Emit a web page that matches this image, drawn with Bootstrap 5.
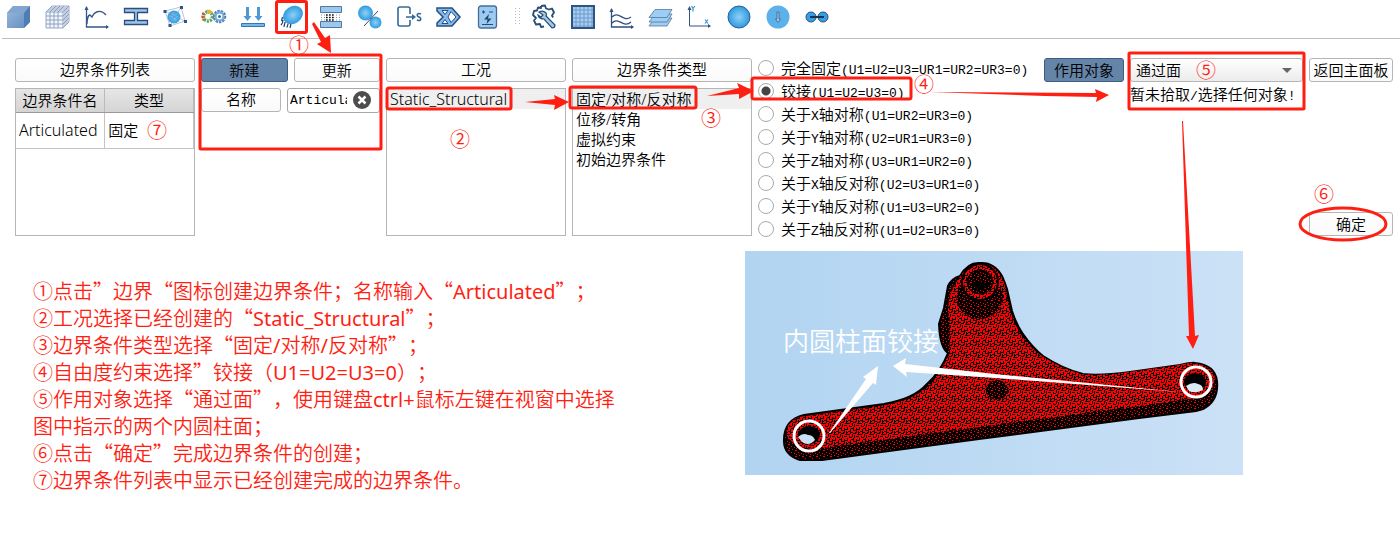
<!DOCTYPE html>
<html lang="zh-CN">
<head>
<meta charset="utf-8">
<meta name="viewport" content="width=device-width, initial-scale=1">
<title>边界条件</title>
<link href="https://cdn.jsdelivr.net/npm/bootstrap@5.3.0/dist/css/bootstrap.min.css" rel="stylesheet">
<style>
:root { --hot: #ff1e12; --edge: #b5b5b5; }
body { font-family: "Noto Sans", "Noto Sans CJK SC", sans-serif; font-size: 15px; line-height: 20px; color: #000; background: #fff; text-spacing-trim: space-all; }
.toolbar { height: 39px; border-bottom: 1px solid #bdbdbd; margin-left: 2px; padding-bottom: 4px; }
.tool { width: 39px; height: 34px; padding: 0; border: 0; background: none; flex: none; }
.tool:first-child { margin-left: -3px; }
.tool svg { width: 26px; height: 26px; display: block; margin: auto; }
.tool.hotbox { width: 33px; margin: 0 3px; }
.grip { width: 18px; height: 18px; }
.hotbox { outline: 3px solid var(--hot); outline-offset: -3px; border-radius: 3px; }
.panels { display: grid; grid-template-columns: 180fr 179fr 180fr 180fr 280fr 80fr 173fr 84fr; gap: 6px; padding: 17px 7px 0 15px; }
.pane { position: relative; min-width: 0; display: flex; flex-direction: column; gap: 6px; padding-top: 2px; }
.half { font-family: "Liberation Mono", monospace; font-size: 13px; line-height: 1; }
.wide { font-size: 16px; line-height: 1; }
.cell { height: 24px; padding: 0; border: 1px solid var(--edge); border-radius: 3px; background: linear-gradient(#fff, #fafafa); font-size: 15px; line-height: 20px; color: #000; white-space: nowrap; text-align: center; font-family: "Noto Sans CJK SC", sans-serif; font-weight: 350; }
.cell.picked { background: #6484a8; border-color: #3c5c80; }
.pair { display: grid; grid-template-columns: 1fr 1fr; gap: 6px; }
.pair.named { grid-template-columns: 80fr 93fr; }
.frame { border: 1px solid var(--edge); flex: 1 1 auto; min-height: 148px; }
.choices { padding: 0; margin: 0; list-style: none; font-weight: 350; }
.choices li { padding: 0 3px; }
.choices li.on { background: #efefef; }
.grid-table { width: 100%; border-collapse: collapse; table-layout: fixed; font-weight: 350; }
.grid-table th { font-weight: 350; height: 23px; padding: 0; text-align: center; background: linear-gradient(#e6e6e6, #d4d4d4); border-bottom: 1px solid #999; border-right: 1px solid #bbb; white-space: nowrap; }
.grid-table td { height: 36px; padding: 0 3px; border-right: 1px solid #c4c4c4; border-bottom: 1px solid #c4c4c4; white-space: nowrap; }
.grid-table th:first-child { width: 50%; }
.namebox { position: relative; }
.namebox input { width: 100%; height: 25px; border: 1px solid #a8a8a8; border-radius: 3px; padding: 0 32px 0 2px; font-family: "Liberation Mono", monospace; font-size: 13px; display: block; }
.namebox button { position: absolute; right: 9px; top: 3px; width: 18px; height: 18px; padding: 0; border: 0; background: none; }
.namebox svg { display: block; }
.opts { padding-top: 0; gap: 0; margin-bottom: -4px; }
.opts label { display: flex; align-items: center; gap: 7px; height: 23px; white-space: nowrap; font-weight: 350; font-family: "Noto Sans CJK SC", sans-serif; }
.opts input { appearance: none; width: 16px; height: 16px; margin: 0; border: 1px solid #a9a9a9; border-radius: 50%; background: #fff; flex: none; }
.opts input:checked { background: radial-gradient(circle, #444 0 4px, #fff 5px); }
.combo { width: 100%; text-align: left; appearance: none; padding: 0 5px; background: url("data:image/svg+xml,%3Csvg xmlns='http://www.w3.org/2000/svg' width='10' height='5'%3E%3Cpath d='M0 0h10L5 5z' fill='%23666'/%3E%3C/svg%3E") no-repeat right 10px center, linear-gradient(#fff, #ececec); }
.status { font-family: "Noto Sans CJK SC", sans-serif; font-weight: 350; margin-top: -4px; white-space: nowrap; }
.marks { position: absolute; left: 0; top: 0; width: 1px; height: 1px; overflow: visible; pointer-events: none; z-index: 3; fill: var(--hot); font-family: "Noto Sans CJK SC", sans-serif; font-size: 20px; font-weight: 350; }
.marks .ring { fill: none; stroke: var(--hot); stroke-width: 3; }
.lower { display: grid; grid-template-columns: 745fr 498fr 157fr; padding-top: 15px; }
.steps { padding: 26px 0 0 33px; color: var(--hot); font-size: 20px; line-height: 27px; font-family: "Noto Sans CJK SC", sans-serif; font-weight: 350; }
.steps p { margin: 0; }
.steps span { font-family: "Noto Sans", sans-serif; font-weight: 400; line-height: 1; }
.model { display: block; width: 100%; height: auto; }
</style>
</head>
<body>
<svg width="0" height="0" class="position-absolute" aria-hidden="true">
  <defs>
    <radialGradient id="ball"><stop offset="0" stop-color="#8fd0f5"/><stop offset="1" stop-color="#2f9be0"/></radialGradient>
    <linearGradient id="steel" x2="1" y2="1"><stop offset="0" stop-color="#9dbcdd"/><stop offset="1" stop-color="#5f8bbd"/></linearGradient>
    <linearGradient id="sky" x1="0" y1="0" x2="1" y2="0"><stop offset="0" stop-color="#b1d4f1"/><stop offset="1" stop-color="#cbe1f6"/></linearGradient>
    <pattern id="mesh" width="12" height="11" patternUnits="userSpaceOnUse"><g shape-rendering="crispEdges"><path d="M0 0h12v11H0z" fill="#f00"/><path d="M0 0h1v4H0zM3 1h1v5H3zM6 0h1v3H6zM9 2h1v5H9zM1 3h2v1H1zM4 2h2v1H4zM7 4h2v1H7zM10 1h2v1h-2zM0 6h3v1H0zM5 4h1v4H5zM6 7h3v1H6zM10 5h2v1h-2zM1 8h1v3H1zM3 9h3v1H3zM8 9h1v2H8zM11 7h1v3h-1zM9 10h2v1H9zM4 7h1v1H4zM2 5h1v1H2zM6 5h1v1H6z" fill="#000"/></g></pattern>
    <pattern id="dense" width="7" height="6" patternUnits="userSpaceOnUse"><g shape-rendering="crispEdges"><path d="M0 0h7v6H0z"/><path d="M1 1h2v1H1zM4 3h1v1H4zM0 4h1v1H0zM5 0h1v1H5zM2 5h1v1H2z" fill="#f00"/></g></pattern>
  </defs>
</svg>

<header class="toolbar d-flex align-items-center position-relative">
  <button class="tool" aria-label="几何"><svg viewBox="0 0 26 26"><path d="M1 9 7 2h17v16l-6 6H1z" fill="url(#steel)"/><path d="M1 9 7 2h17l-6 7z" fill="#82a6cf"/><path d="m18 9 6-7v16l-6 6z" fill="#4f7db2"/></svg></button>
  <button class="tool" aria-label="网格"><svg viewBox="0 0 26 26" fill="none" stroke="#7c94b8" stroke-width=".8"><path fill="#f2f6fc" d="M1 8 7 2h17v16l-6 6H1z"/><path d="M1 8h17v16M1 12h17M1 16h17M1 20h17M5 8v16M9 8v16M13 8v16M3 6h17M5 4h17M5 8l6-6M9 8l6-6M13 8l6-6M18 8l6-6M18 12l6-6M18 16l6-6M18 20l6-6M20 6v16M22 4v16"/></svg></button>
  <button class="tool" aria-label="曲线"><svg viewBox="0 0 26 26" fill="none" stroke="#35568a" stroke-width="1.300"><path d="M2.500 3v20H24M3 20c0-4 1-9 3-9l2 2C11 6 18 6 22 11"/><path d="m.5 6 2-4 2 4zM22 21l3 2-3 2z" fill="#35568a" stroke="none"/></svg></button>
  <button class="tool" aria-label="截面"><svg viewBox="0 0 26 26" fill="#9cc6ea" stroke="#2e4d78" stroke-width="1.300"><path d="M1.500 4.500h23v4H14.500v8h10v4h-23v-4h10v-8h-10z"/></svg></button>
  <button class="tool" aria-label="耦合"><svg viewBox="0 0 26 26"><path d="m3 7 16-4 4 14-15 5zM3 7l20 10M19 3 8 22" fill="none" stroke="#a9b5c6" stroke-width=".8"/><circle cx="12" cy="13" r="6.500" fill="url(#ball)"/><path d="M8 10l8 5M14 8l-4 9M8 15l8-4" stroke="#5b8fc0" stroke-width=".7"/><g fill="#315487"><path d="M1.500 6h3v3h-3zM18 2h3v3h-3zM22 16h3v3h-3zM6.500 20h3v3h-3z"/></g></svg></button>
  <button class="tool" aria-label="属性"><svg viewBox="0 0 26 26" fill="none"><circle cx="7" cy="12.500" r="4.500" stroke="#5aab56" stroke-width="3.500" stroke-dasharray="2 1"/><path d="M6 7a6 6 0 0 1 5 2" stroke="#e7b232" stroke-width="3"/><path d="M3 9a6 6 0 0 0 0 7" stroke="#d05239" stroke-width="3" stroke-dasharray="2 1"/><circle cx="18.500" cy="12.500" r="5" stroke="#4c86bc" stroke-width="3.500" stroke-dasharray="2.200 .8"/><circle cx="18.500" cy="12.500" r="4" stroke="#7badd6" stroke-width="2"/><circle cx="18.500" cy="12.500" r="1.500" fill="#3b6c9e"/></svg></button>
  <button class="tool" aria-label="载荷"><svg viewBox="0 0 26 26" fill="#4f98d6"><path d="M6 3h3v9h2.500l-4 5-4-5H6zM17 3h3v9h2.500l-4 5-4-5H17z"/><path d="M1.500 19.500h23v3h-23z" fill="#78b7ea" stroke="#3475b4"/></svg></button>
  <button class="tool hotbox" aria-label="边界"><svg viewBox="0 0 26 26"><ellipse cx="14" cy="11" rx="10.500" ry="8.500" transform="rotate(-35 14 11)" fill="url(#ball)"/><path d="M4 16c0 3-1 4-2 5M6 18c0 2-1 3-1 5M9 19.500c0 2-1 3-1 4M12 20l-1 4M3.500 13l-1 4" fill="none" stroke="#263d60" stroke-width="1.200"/></svg></button>
  <button class="tool" aria-label="接触"><svg viewBox="0 0 26 26"><path d="M2.500 2.500h21v6h-21zM2.500 17.500h21v6h-21z" fill="#9dc8ee" stroke="#52779f"/><path d="M3 11h20M3 13.500h20M3 16h20" stroke="#8392a8" stroke-dasharray="1 2"/><path d="M8 11h9M8 13.500h9M8 16h9" stroke="#111" stroke-width="1.500" stroke-dasharray="1.500 1.500"/></svg></button>
  <button class="tool" aria-label="连接"><svg viewBox="0 0 26 26"><circle cx="8.500" cy="9" r="7.500" fill="url(#ball)"/><circle cx="18.500" cy="18.500" r="6" fill="url(#ball)"/><path d="M21 7 7 22" stroke="#35465d"/></svg></button>
  <button class="tool" aria-label="输出"><svg viewBox="0 0 26 26" fill="none" stroke="#346997" stroke-width="1.600"><path d="M14 10V5q0-2-2-2H4Q2 3 2 5v15q0 2 2 2h8q2 0 2-2v-4M10 13h8"/><path d="m16 10 4 3-4 3z" fill="#346997" stroke="none"/><path d="M25 10c-4-2-5 2-2 3s2 5-2 3"/></svg></button>
  <button class="tool" aria-label="求解"><svg viewBox="0 0 26 26"><path d="M2 4h15l8 9-8 9H2v-3l6-6-6-6z" fill="#80bcf0" stroke="#294d7d" stroke-width="1.500"/><path d="M7 6.500h6l-3 4zM7 19.500h6l-3-4zM16 7.500 21 13l-5 5.500-3-5.500z" fill="#fff" stroke="#294d7d"/></svg></button>
  <button class="tool" aria-label="计算"><svg viewBox="0 0 26 26"><rect x="4.500" y="2" width="18" height="22" rx="2.500" fill="#9bcaf3" stroke="#4a6d98" stroke-width="1.300"/><path d="M8 8h3M9.500 6.500v3M15 8h4M8 20.500h11" stroke="#294b78" stroke-width="1.200"/><path d="m15 10-5 5.500h3.500L12.500 20l5-5.500H14z" fill="#21436d"/></svg></button>
  <svg class="grip" viewBox="0 0 18 18" aria-hidden="true"><path d="M9.500 0v18M13.500 0v18" stroke="#b9b9b9" stroke-dasharray="1 2"/></svg>
  <button class="tool" aria-label="设置"><svg viewBox="0 0 26 26"><path d="m10 2 4-.5 1 3 3 1 3-1 2 4-2 3 1 2M13 22.500l-3 .5-1-3-4 .5-2-4 2-2.500-3-3 1-4 3-.5 1-3 3 .5 0-2" fill="none" stroke="#284c78" stroke-width="1.800" stroke-linejoin="round"/><path d="M8 8q4-2 7 1 1 2 0 3l9 9q0 3-3 3l-8-9q-5 0-6-4l3 2 2-2z" fill="#9ecbee" stroke="#284c78" stroke-width="1.200"/></svg></button>
  <button class="tool" aria-label="表格"><svg viewBox="0 0 26 26"><path d="M2 2h22v22H2z" fill="#a3cdf3" stroke="#2f5482" stroke-width="2"/><path d="M6 3v20M10 3v20M14 3v20M18 3v20M22 3v20M3 6h20M3 10h20M3 14h20M3 18h20M3 22h20" stroke="#658fbd" stroke-width=".8"/></svg></button>
  <button class="tool" aria-label="图表"><svg viewBox="0 0 26 26" fill="none" stroke="#2d4f7e" stroke-width="1.300"><path d="M2.500 5v18H24M3 13c7-7 11 6 19 0M3 19c7-7 11 6 19-1"/><path d="m.5 8 2-4 2 4zM22 21l3 2-3 2z" fill="#2d4f7e" stroke="none"/></svg></button>
  <button class="tool" aria-label="图层"><svg viewBox="0 0 26 26" fill="#9fccf2" stroke="#54779e" stroke-width=".8"><path d="M7 14h17l-5 8H1z"/><path d="M7 10h17l-5 8H1z"/><path d="M7 5.500h17l-5 8H1z"/></svg></button>
  <button class="tool" aria-label="坐标"><svg viewBox="0 0 26 26" fill="none" stroke="#34547d"><path d="M2.500 4v18H23"/><path d="m.5 6 2-4 2 4zM21 20l3 2-3 2z" fill="#34547d" stroke="none"/><path d="m4.500 2 1.500 2.500v3M8 2 6 4.500M18 15.500l3 4m0-4-3 4" stroke="#3399d8" stroke-width="1.200"/></svg></button>
  <button class="tool" aria-label="球体"><svg viewBox="0 0 26 26"><circle cx="13" cy="13" r="11" fill="url(#ball)" stroke="#2b5f91"/></svg></button>
  <button class="tool" aria-label="下移"><svg viewBox="0 0 26 26"><circle cx="13" cy="13" r="11.500" fill="#5cb1ea"/><path d="M12 8h2v7h1.500L13 18.500 10.500 15H12z" fill="#a5c8e9" stroke="#3c638e" stroke-width=".8"/></svg></button>
  <button class="tool" aria-label="关联"><svg viewBox="0 0 26 26" fill="#35a0df" stroke="#294f7e"><circle cx="7" cy="13" r="5"/><circle cx="19" cy="13" r="5"/><path d="M6 13h14" stroke="#173456" stroke-width="2"/></svg></button>
  <svg class="marks" aria-hidden="true"><path d="m310 24 2-2 11 16 5-3 1 18-14-9 4-2z"/><text x="287" y="53">①</text></svg>
</header>

<main>
<div class="panels">
  <section class="pane">
    <div class="cell">边界条件列表</div>
    <div class="frame">
      <table class="grid-table"><thead><tr><th>边界条件名</th><th>类型</th></tr></thead><tbody><tr><td><span class="wide">Articulated</span></td><td>固定</td></tr></tbody></table>
    </div>
    <svg class="marks" aria-hidden="true"><text x="132" y="82">⑦</text></svg>
  </section>

  <section class="pane">
    <div class="pair"><button class="cell picked">新建</button><button class="cell">更新</button></div>
    <div class="pair named"><label class="cell" for="bcname">名称</label><div class="namebox"><input id="bcname" value="Articulated"><button aria-label="清除"><svg viewBox="0 0 18 18" width="18" height="18"><circle cx="9" cy="9" r="9" fill="#4d4d4d"/><path d="m5.500 5.500 7 7m0-7-7 7" stroke="#fff" stroke-width="2.500"/></svg></button></div></div>
    <svg class="marks" aria-hidden="true"><rect class="ring" x="-1" y="-1" width="181" height="94" rx="1"/></svg>
  </section>

  <section class="pane">
    <div class="cell">工况</div>
    <div class="frame"><ul class="choices"><li class="on"><span class="wide">Static_Structural</span></li></ul></div>
    <svg class="marks" aria-hidden="true"><rect class="ring" x="1" y="32" width="124" height="21" rx="2"/><path d="m139 46 30-3-1-4 15 7-15 8 1-5z"/><text x="64" y="91">②</text></svg>
  </section>

  <section class="pane">
    <div class="cell">边界条件类型</div>
    <div class="frame"><ul class="choices"><li class="on">固定/对称/反对称</li><li>位移/转角</li><li>虚拟约束</li><li>初始边界条件</li></ul></div>
    <svg class="marks" aria-hidden="true"><rect class="ring" x="-2" y="31" width="126" height="21" rx="2"/><path d="m135 40 32-8-2-5 17 8-15 8v-5z"/><text x="129" y="70">③</text></svg>
  </section>

  <section class="pane opts">
    <label><input type="radio" name="dof"><span>完全固定<span class="half">(U1=U2=U3=UR1=UR2=UR3=0)</span></span></label>
    <label><input type="radio" name="dof" checked><span>铰接<span class="half">(U1=U2=U3=0)</span></span></label>
    <label><input type="radio" name="dof"><span>关于<span class="half">X</span>轴对称<span class="half">(U1=UR2=UR3=0)</span></span></label>
    <label><input type="radio" name="dof"><span>关于<span class="half">Y</span>轴对称<span class="half">(U2=UR1=UR3=0)</span></span></label>
    <label><input type="radio" name="dof"><span>关于<span class="half">Z</span>轴对称<span class="half">(U3=UR1=UR2=0)</span></span></label>
    <label><input type="radio" name="dof"><span>关于<span class="half">X</span>轴反对称<span class="half">(U2=U3=UR1=0)</span></span></label>
    <label><input type="radio" name="dof"><span>关于<span class="half">Y</span>轴反对称<span class="half">(U1=U3=UR2=0)</span></span></label>
    <label><input type="radio" name="dof"><span>关于<span class="half">Z</span>轴反对称<span class="half">(U1=U2=UR3=0)</span></span></label>
    <svg class="marks" aria-hidden="true"><rect class="ring" x="-6" y="22" width="159" height="21" rx="2"/><path d="m172 36 166 1-1-4 14 6-13 7 1-5-52-1z"/><text x="156" y="36">④</text></svg>
  </section>

  <section class="pane"><button class="cell picked">作用对象</button></section>

  <section class="pane">
    <select class="cell combo" aria-label="选择方式"><option>通过面</option></select>
    <div class="status">暂未拾取<span class="half">/</span>选择任何对象<span class="half">!</span></div>
    <svg class="marks" aria-hidden="true"><rect class="ring" x="-1" y="-3" width="175" height="56" rx="1"/><text x="66" y="22">⑤</text><path d="M52 65h1l12 215 4-1-6 14-7-13h3z"/></svg>
  </section>

  <section class="pane justify-content-between">
    <button class="cell">返回主面板</button>
    <button class="cell">确定</button>
    <svg class="marks" aria-hidden="true"><ellipse class="ring" cx="34" cy="168" rx="43" ry="16"/><text x="5" y="146">⑥</text></svg>
  </section>
</div>

<div class="lower">
  <section class="steps">
    <p>①点击”边界“图标创建边界条件；名称输入“<span>Articulated</span>”；</p>
    <p>②工况选择已经创建的“<span>Static_Structural</span>”；</p>
    <p>③边界条件类型选择“固定<span>/</span>对称<span>/</span>反对称”；</p>
    <p>④自由度约束选择”铰接（<span>U1=U2=U3=0</span>）；</p>
    <p>⑤作用对象选择“通过面”，使用键盘<span>ctrl+</span>鼠标左键在视窗中选择<br>图中指示的两个内圆柱面；</p>
    <p>⑥点击“确定”完成边界条件的创建；</p>
    <p>⑦边界条件列表中显示已经创建完成的边界条件。</p>
  </section>
  <svg class="model" viewBox="0 0 498 224" role="img" aria-label="内圆柱面铰接">
    <path fill="url(#sky)" d="M0 0h498v224H0z"/>
    <path d="M39 191q-1-22 20-27l80-11q30-5 43-20 14-13 21-31-8-5-9-29l5-16 4-22q3-7 12-10 8-14 20-13 14-1 22 13 3 7 5 13l5 22q5 15 11 23 9 13 20 22 20 13 40 18 17 2 47-2l50-7q13-3 15-2 20 2 22 18 2 20-14 28l-7 2-57 7-160 21-90 12-67 9h-22q-16-5-16-19z" fill="url(#dense)" stroke="#000" stroke-width="2"/>
    <path d="M41 182q2-16 20-17l80-11q30-6 45-21 12-14 19-32l-2-40q0-20 10-32 8-15 22-16 14-1 21 12 4 7 4 13l5 22q5 15 12 25 9 13 20 20 20 13 40 18 17 2 47-2l50-7q13-3 15-2 20 3 21 16-1 16-19 19l-56 8-160 21-90 12-75 10q-24-1-29-16z" fill="url(#mesh)"/>
    <path d="M200 58q-7 12-4 30l7 9q3-16 1-29z" fill="url(#dense)"/>
    <path d="M216 34q-6 8-4 18 8 20 30 15 17-6 16-28z" fill="url(#dense)"/>
    <circle cx="235" cy="31" r="18" fill="url(#mesh)" stroke="#000" stroke-width="2"/>
    <ellipse cx="235" cy="31" rx="13" ry="12" fill="url(#dense)" stroke="#000"/>
    <path d="M225 33q9-6 20 1-9 9-20-1z"/>
    <ellipse cx="252" cy="139" rx="11" ry="10" fill="url(#dense)"/>
    <ellipse cx="64" cy="184" rx="11" ry="9" fill="#000"/>
    <ellipse cx="450" cy="131" rx="11" ry="9" fill="#000"/>
    <path d="M53 186q5-5 10-2 5 0 7 5-6 7-13 2z" fill="#c9dff4"/>
    <path d="M441 135q7-5 12-2 5 1 5 6-8 4-14 1z" fill="#dceaf8"/>
    <g fill="none" stroke="#fff" stroke-width="3"><circle cx="64" cy="185" r="15"/><circle cx="451" cy="131" r="15"/></g>
    <g fill="#fff"><path d="m84 182 37-54-3-2 15-11-2 19-3-2-43 50zM435 141 250 127 161 121l1 5-14-11 13-8-1 6 90 10z"/></g>
    <text x="38" y="100" fill="#fff" font-family="Noto Sans CJK SC, sans-serif" font-weight="350" font-size="26">内圆柱面铰接</text>
  </svg>
</div>
</main>
<script src="https://cdn.jsdelivr.net/npm/bootstrap@5.3.0/dist/js/bootstrap.bundle.min.js"></script>
</body>
</html>
